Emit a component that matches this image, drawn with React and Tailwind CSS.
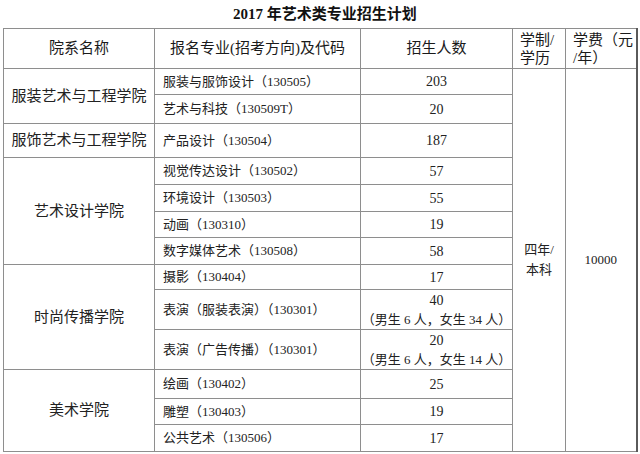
const FONT = { fontFamily: '"Liberation Serif", "Noto Sans CJK SC", serif' }

const ROWS = [
  { college: '服装艺术与工程学院', span: 2, major: '服装与服饰设计（130505）', num: '203', h: 'h-[26px]' },
  { major: '艺术与科技（130509T）', num: '20', h: 'h-[29px]' },
  { college: '服饰艺术与工程学院', span: 1, major: '产品设计（130504）', num: '187', h: 'h-[34px]' },
  { college: '艺术设计学院', span: 4, major: '视觉传达设计（130502）', num: '57', h: 'h-[27px]' },
  { major: '环境设计（130503）', num: '55', h: 'h-[27px]' },
  { major: '动画（130310）', num: '19', h: 'h-[26px]' },
  { major: '数字媒体艺术（130508）', num: '58', h: 'h-[27px]' },
  { college: '时尚传播学院', span: 3, major: '摄影（130404）', num: '17', h: 'h-[25px]' },
  { major: '表演（服装表演）（130301）', num: '40', note: '（男生 6 人，女生 34 人）', h: 'h-[40px]' },
  { major: '表演（广告传播）（130301）', num: '20', note: '（男生 6 人，女生 14 人）', h: 'h-[40px]' },
  { college: '美术学院', span: 3, major: '绘画（130402）', num: '25', h: 'h-[29px]' },
  { major: '雕塑（130403）', num: '19', h: 'h-[26px]' },
  { major: '公共艺术（130506）', num: '17', h: 'h-[27px]' },
]

const cell = 'border border-[#8e8e8e] align-middle p-0'

export default function App() {
  return (
    <div className="w-[640px] h-[454px] bg-white text-[#222]" style={FONT}>
      <div className="h-[28px] flex items-center justify-center pl-[10px] text-[15px] font-bold text-[#111]">
        2017 年艺术类专业招生计划
      </div>
      <table className="ml-[3px] w-[633px] table-fixed border-collapse">
        <colgroup>
          <col className="w-[151px]" />
          <col className="w-[206px]" />
          <col className="w-[152px]" />
          <col className="w-[53px]" />
          <col className="w-[71px]" />
        </colgroup>
        <thead>
          <tr className="h-[40px] text-[15px] text-[#1a1a1a]">
            <th className={`${cell} font-normal text-center`}>院系名称</th>
            <th className={`${cell} font-normal text-center`}>报名专业(招考方向)及代码</th>
            <th className={`${cell} font-normal text-center`}>招生人数</th>
            <th className={`${cell} font-normal text-left pl-[7px] leading-[18px]`}>
              学制/<br />学历
            </th>
            <th className={`${cell} font-normal text-left pl-[7px] leading-[18px] border-r-2 border-r-[#5a5a5a]`}>
              学费（元<br />/年）
            </th>
          </tr>
        </thead>
        <tbody>
          {ROWS.map((r, i) => (
            <tr key={i} className={r.h}>
              {r.college && (
                <td rowSpan={r.span} className={`${cell} text-center text-[15px]`}>
                  {r.college}
                </td>
              )}
              <td className={`${cell} text-left pl-[8px] text-[13px]`}>{r.major}</td>
              <td className={`${cell} text-center text-[14px] leading-[19px]`}>
                {r.num}
                {r.note && <div className="text-[13px]">{r.note}</div>}
              </td>
              {i === 0 && (
                <>
                  <td rowSpan={13} className={`${cell} text-center text-[13px] leading-[20px]`}>
                    四年/<br />本科
                  </td>
                  <td rowSpan={13} className={`${cell} text-center text-[13px] border-r-2 border-r-[#5a5a5a]`}>
                    10000
                  </td>
                </>
              )}
            </tr>
          ))}
        </tbody>
      </table>
    </div>
  )
}
